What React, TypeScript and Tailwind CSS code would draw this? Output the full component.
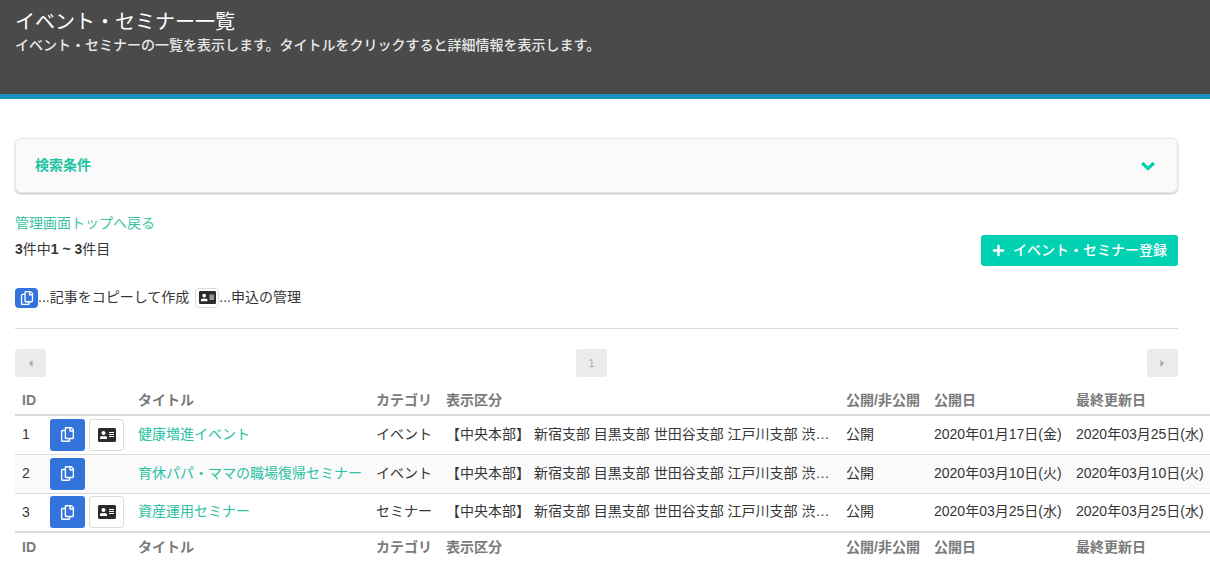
import React from "react";
import { FaRegCopy, FaAddressCard, FaPlus, FaCaretLeft, FaCaretRight } from "react-icons/fa";

const rows = [
  { id: 1, title: "健康増進イベント", category: "イベント", apply: true, published: "2020年01月17日(金)", updated: "2020年03月25日(水)" },
  { id: 2, title: "育休パパ・ママの職場復帰セミナー", category: "イベント", apply: false, published: "2020年03月10日(火)", updated: "2020年03月10日(火)" },
  { id: 3, title: "資産運用セミナー", category: "セミナー", apply: true, published: "2020年03月25日(水)", updated: "2020年03月25日(水)" },
];

const area = "【中央本部】 新宿支部 目黒支部 世田谷支部 江戸川支部 渋…";

function HeadRow() {
  return (
    <tr className="text-left text-[14px] font-bold text-[#7a7a7a]">
      <th className="h-[29px] pl-[7px] font-bold">ID</th>
      <th />
      <th className="pl-[7px] font-bold">タイトル</th>
      <th className="pl-[7px] font-bold">カテゴリ</th>
      <th className="pl-[7px] font-bold">表示区分</th>
      <th className="pl-[7px] font-bold">公開/非公開</th>
      <th className="pl-[7px] font-bold">公開日</th>
      <th className="pl-[7px] font-bold">最終更新日</th>
    </tr>
  );
}

function PageButton({ children }: { children: React.ReactNode }) {
  return (
    <div className="flex h-[28px] w-[31px] items-center justify-center rounded-[3px] bg-[#ebebeb] text-[11px] text-[#aaaaaa]">
      {children}
    </div>
  );
}

export default function App() {
  return (
    <div
      className="h-[564px] w-[1210px] overflow-hidden bg-white text-[14px] text-[#363636]"
      style={{ fontFamily: '"Liberation Sans", "Noto Sans CJK JP", sans-serif' }}
    >
      <div className="h-[99px] border-b-[5px] border-[#1b91bf] bg-[#4a4a4a] px-[15px] pt-[10px] text-white">
        <h1 className="text-[20px] leading-[24px]">イベント・セミナー一覧</h1>
        <p className="pt-[1px] text-[14px] font-medium leading-[20px] text-[#e8e8e8]">イベント・セミナーの一覧を表示します。タイトルをクリックすると詳細情報を表示します。</p>
      </div>

      <div className="w-[1178px] pl-[15px] pt-[39px]">
        <div className="flex h-[55px] items-center justify-between rounded-[6px] border border-[#e6e6e6] bg-[#fafafa] pl-[19px] pr-[22px] shadow-[0_1px_2px_rgba(0,0,0,0.25)]">
          <span className="font-bold text-[#1fc4a2]">検索条件</span>
          <svg viewBox="0 0 14 10" className="h-[10px] w-[14px]" fill="none" stroke="#00d1b2" strokeWidth="3.2">
            <path d="M1.2 2 L7 7.6 L12.8 2" />
          </svg>
        </div>

        <div className="mt-[20px] flex items-end justify-between">
          <div>
            <div className="leading-[20px] text-[#3cc3a5]">管理画面トップへ戻る</div>
            <div className="mt-[6px] leading-[20px]">
              <b>3</b>件中<b>1 ~ 3</b>件目
            </div>
          </div>
          <div className="flex h-[31px] w-[197px] translate-y-[7px] items-center justify-center gap-[8px] rounded-[3px] bg-[#00d1b2] font-medium text-white">
            <FaPlus className="text-[13px]" />
            <span>イベント・セミナー登録</span>
          </div>
        </div>

        <div className="mt-[28px] flex items-center">
          <span className="flex h-[20px] w-[23px] items-center justify-center rounded-[4px] bg-[#3273dc] text-[14px] text-white">
            <FaRegCopy />
          </span>
          <span>...記事をコピーして作成</span>
          <span className="ml-[6px] flex h-[20px] w-[24px] items-center justify-center rounded-[4px] border border-[#dbdbdb] bg-white text-[17px] text-[#2b2b2b]">
            <FaAddressCard />
          </span>
          <span>...申込の管理</span>
        </div>

        <div className="mt-[20px] border-t border-[#dbdbdb]" />

        <div className="mt-[20px] flex justify-between">
          <PageButton><FaCaretLeft /></PageButton>
          <div className="mr-[10px]"><PageButton>1</PageButton></div>
          <PageButton><FaCaretRight /></PageButton>
        </div>
      </div>

      <table className="ml-[15px] mt-[9px] w-[1200px] table-fixed border-collapse">
        <colgroup>
          <col className="w-[28px]" />
          <col className="w-[88px]" />
          <col className="w-[238px]" />
          <col className="w-[70px]" />
          <col className="w-[400px]" />
          <col className="w-[88px]" />
          <col className="w-[142px]" />
          <col className="w-[146px]" />
        </colgroup>
        <thead className="border-b-2 border-[#dbdbdb]">
          <HeadRow />
        </thead>
        <tbody>
          {rows.map((r, i) => (
            <tr key={r.id} className={`h-[39px] border-b border-[#dbdbdb] ${i === 1 ? "bg-[#fafafa]" : ""} ${i === 2 ? "border-b-0" : ""}`}>
              <td className="pl-[7px]">{r.id}</td>
              <td className="pl-[7px]">
                <div className="flex gap-[4px]">
                  <span className="flex h-[32px] w-[35px] items-center justify-center rounded-[3px] bg-[#3273dc] text-[15px] text-white">
                    <FaRegCopy />
                  </span>
                  {r.apply && (
                    <span className="flex h-[32px] w-[35px] items-center justify-center rounded-[3px] border border-[#dbdbdb] bg-white text-[18px] text-[#2b2b2b]">
                      <FaAddressCard />
                    </span>
                  )}
                </div>
              </td>
              <td className="whitespace-nowrap pb-[1px] pl-[7px] text-[#2bc1a3]">{r.title}</td>
              <td className="whitespace-nowrap pb-[1px] pl-[7px]">{r.category}</td>
              <td className="whitespace-nowrap pb-[1px] pl-[7px]">{area}</td>
              <td className="pb-[1px] pl-[7px]">公開</td>
              <td className="whitespace-nowrap pb-[1px] pl-[7px]">{r.published}</td>
              <td className="whitespace-nowrap pb-[1px] pl-[7px]">{r.updated}</td>
            </tr>
          ))}
        </tbody>
        <tfoot className="border-t-2 border-[#dbdbdb]">
          <HeadRow />
        </tfoot>
      </table>
    </div>
  );
}
